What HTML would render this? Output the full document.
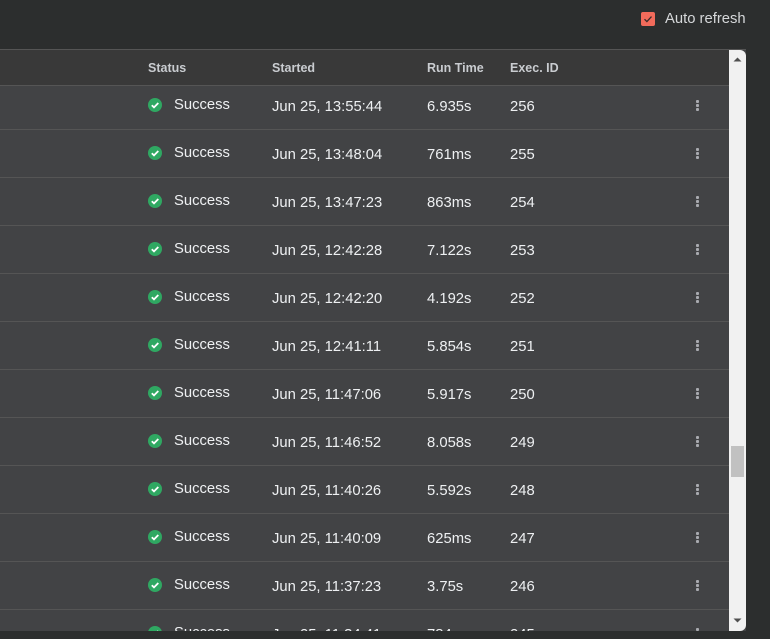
<!DOCTYPE html>
<html><head><style>
body{margin:0;width:770px;height:639px;background:#2c2e2e;font-family:"Liberation Sans",sans-serif;overflow:hidden;position:relative}
.top{position:absolute;left:641px;top:12px;width:14px;height:14px;background:#f26b5b;border-radius:2px}
.lbl{position:absolute;left:665px;top:11px;color:#d6d8da;font-size:14.8px}
.panel{position:absolute;left:0;top:49px;width:746px;height:581px;background:#424345;border-top:1px solid #555;overflow:hidden}
.head{position:absolute;left:0;top:0;width:729px;height:35px;background:#393939;border-bottom:1px solid #555}
.h{position:absolute;top:11px;font-size:12.5px;font-weight:bold;color:#c9ccd0}
.row{position:absolute;left:0;width:729px;height:47px;border-bottom:1px solid #555}
.c{position:absolute;font-size:14.8px;color:#eef0f2;top:0}
.ic{position:absolute;left:148px;width:14px;height:14px;border-radius:50%;background:#2fa862}
.dots{position:absolute;left:696px;width:3px}
.dots i{display:block;width:3px;height:3px;background:#a9abb0;margin-bottom:1px;border-radius:1px}
.sb{position:absolute;left:729px;top:0;width:17px;height:581px;background:#f1f1f1;border-radius:0 6px 6px 0}
.th{position:absolute;left:2px;top:396px;width:13px;height:31px;background:#c1c1c1}
</style></head><body>
<div class="top"><svg width="14" height="14"><path d="M3.5 7.2l2.4 2.4 4.6-5" stroke="#3a2a28" stroke-width="1.3" fill="none"/></svg></div>
<div class="lbl">Auto refresh</div>
<div class="panel">
<div class="head">
<div class="h" style="left:148px">Status</div>
<div class="h" style="left:272px">Started</div>
<div class="h" style="left:427px">Run Time</div>
<div class="h" style="left:510px">Exec. ID</div>
</div>
<div id="rows"></div>
<div class="sb"><svg width="17" height="581" style="position:absolute;left:0;top:0"><path d="M4.5 11.5h8l-4-4z" fill="#505050"/><path d="M4.5 568.5h8l-4 4z" fill="#505050"/></svg><div class="th"></div></div>
</div>
<script>
var d=[["13:55:44","6.935s",256],["13:48:04","761ms",255],["13:47:23","863ms",254],["12:42:28","7.122s",253],["12:42:20","4.192s",252],["12:41:11","5.854s",251],["11:47:06","5.917s",250],["11:46:52","8.058s",249],["11:40:26","5.592s",248],["11:40:09","625ms",247],["11:37:23","3.75s",246],["11:34:41","784ms",245]];
var h="";
d.forEach(function(r,i){
 var top= i==0?36:80+(i-1)*48, hh=i==0?43:47;
 var ty=i==0?11:15;
 h+='<div class="row" style="top:'+top+'px;height:'+hh+'px">'+
 '<div class="ic" style="top:'+(ty+1)+'px"><svg width="14" height="14"><path d="M3.8 7.2l2.2 2.2 4.3-4.4" stroke="#fff" stroke-width="1.8" fill="none"/></svg></div>'+
 '<div class="c" style="left:174px;top:'+ty+'px">Success</div>'+
 '<div class="c" style="left:272px;top:'+(ty+2)+'px">Jun 25, '+r[0]+'</div>'+
 '<div class="c" style="left:427px;top:'+(ty+2)+'px">'+r[1]+'</div>'+
 '<div class="c" style="left:510px;top:'+(ty+2)+'px">'+r[2]+'</div>'+
 '<div class="dots" style="top:'+(ty+3)+'px"><i></i><i></i><i></i></div></div>';
});
document.getElementById("rows").innerHTML=h;
</script>
</body></html>
